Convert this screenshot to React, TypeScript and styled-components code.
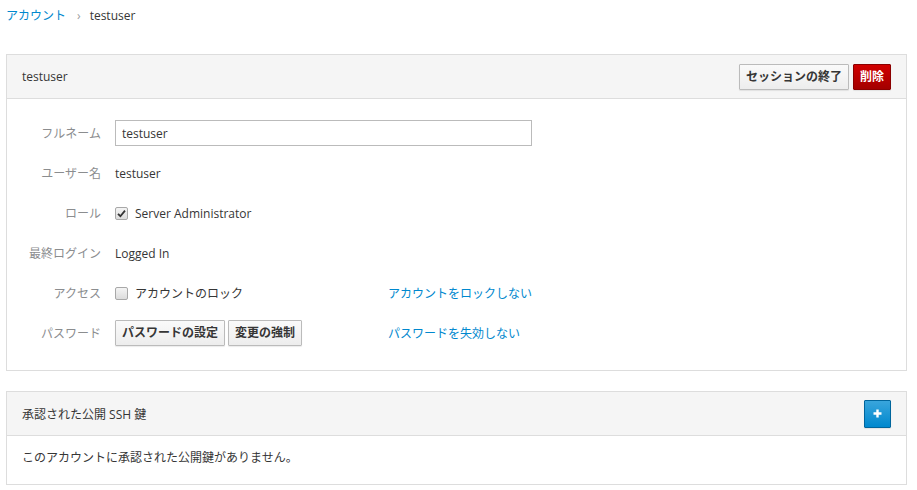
import styled, { createGlobalStyle } from "styled-components";

const GlobalStyle = createGlobalStyle`
  body {
    margin: 0;
    background: #fff;
    font-family: "Open Sans", "Noto Sans CJK JP", sans-serif;
    font-size: 12px;
    color: #363636;
  }
`;

const Page = styled.div`
  padding: 7px 10px 0 6px;
`;

const Breadcrumb = styled.nav`
  display: flex;
  align-items: center;
  gap: 9px;
  line-height: 18px;
  margin-bottom: 29px;
`;

const Crumb = styled.a`
  color: #0088ce;
  text-decoration: none;
  cursor: pointer;
`;

const Sep = styled.span`
  color: #9c9c9c;
  font-size: 12px;
  margin-left: 2px;
`;

const Panel = styled.section`
  border: 1px solid #ddd;
  background: #fff;
  margin-bottom: 20px;
`;

const PanelHeading = styled.header`
  display: flex;
  align-items: center;
  justify-content: space-between;
  height: 43px;
  padding: 0 15px;
  background: #f5f5f5;
  border-bottom: 1px solid #ddd;
`;

const Actions = styled.div`
  display: flex;
  gap: 4px;
`;

const Button = styled.button<{ $variant?: "default" | "danger" | "primary" }>`
  font-family: inherit;
  font-size: 12px;
  font-weight: 700;
  line-height: 20px;
  padding: 2px 6px;
  border-radius: 1px;
  cursor: pointer;
  border: 1px solid
    ${({ $variant }) =>
      $variant === "danger" ? "#8b0000" : $variant === "primary" ? "#00659c" : "#bbb"};
  color: ${({ $variant }) => ($variant && $variant !== "default" ? "#fff" : "#363636")};
  background: ${({ $variant }) =>
    $variant === "danger"
      ? "linear-gradient(#d10000, #a30000)"
      : $variant === "primary"
      ? "linear-gradient(#39a5dc, #0088ce)"
      : "linear-gradient(#fafafa, #ededed)"};
  box-shadow: 0 1px 1px rgba(3, 3, 3, 0.08);
`;

const IconButton = styled(Button)`
  width: 27px;
  height: 28px;
  padding: 0;
  display: flex;
  align-items: center;
  justify-content: center;
`;

const FormBody = styled.div`
  display: grid;
  grid-template-columns: 79px 259px 144px;
  grid-auto-rows: 26px;
  column-gap: 14px;
  row-gap: 14px;
  align-items: center;
  padding: 21px 15px 24px;
`;

const Label = styled.label`
  justify-self: end;
  color: #8b8d8f;
  white-space: nowrap;
`;

const TextInput = styled.input`
  grid-column: 2 / 4;
  height: 26px;
  box-sizing: border-box;
  border: 1px solid #bbb;
  padding: 2px 6px;
  font-family: inherit;
  font-size: 12px;
  color: #363636;
  outline: none;
`;

const Value = styled.div`
  display: flex;
  align-items: center;
  gap: 7px;
  white-space: nowrap;
`;

const Box = styled.span`
  width: 13px;
  height: 13px;
  box-sizing: border-box;
  border: 1px solid #a8a8a8;
  border-radius: 2px;
  background: linear-gradient(#f4f4f4, #dcdcdc);
  display: inline-flex;
  align-items: center;
  justify-content: center;
`;

const Link = styled.a`
  color: #0088ce;
  text-decoration: none;
  white-space: nowrap;
  cursor: pointer;
`;

const ButtonRow = styled.div`
  display: flex;
  gap: 3px;
`;

const PanelBody = styled.div`
  padding: 12px 15px 16px;
  line-height: 20px;
`;

function Checkbox({ checked }: { checked?: boolean }) {
  return (
    <Box>
      {checked && (
        <svg width="9" height="9" viewBox="0 0 9 9">
          <path d="M1 4.8 L3.4 7.2 L8 1.6" fill="none" stroke="#333" strokeWidth="1.8" />
        </svg>
      )}
    </Box>
  );
}

export default function App() {
  return (
    <>
      <GlobalStyle />
      <Page>
        <Breadcrumb>
          <Crumb>アカウント</Crumb>
          <Sep>›</Sep>
          <span>testuser</span>
        </Breadcrumb>

        <Panel>
          <PanelHeading>
            <span>testuser</span>
            <Actions>
              <Button>セッションの終了</Button>
              <Button $variant="danger">削除</Button>
            </Actions>
          </PanelHeading>
          <FormBody>
            <Label>フルネーム</Label>
            <TextInput defaultValue="testuser" />

            <Label>ユーザー名</Label>
            <Value>testuser</Value>
            <span />

            <Label>ロール</Label>
            <Value>
              <Checkbox checked />
              Server Administrator
            </Value>
            <span />

            <Label>最終ログイン</Label>
            <Value>Logged In</Value>
            <span />

            <Label>アクセス</Label>
            <Value>
              <Checkbox />
              アカウントのロック
            </Value>
            <Link>アカウントをロックしない</Link>

            <Label>パスワード</Label>
            <ButtonRow>
              <Button>パスワードの設定</Button>
              <Button>変更の強制</Button>
            </ButtonRow>
            <Link>パスワードを失効しない</Link>
          </FormBody>
        </Panel>

        <Panel>
          <PanelHeading>
            <span>承認された公開 SSH 鍵</span>
            <IconButton $variant="primary">
              <svg width="9" height="9" viewBox="0 0 9 9">
                <path d="M4.5 0.5 V8.5 M0.5 4.5 H8.5" stroke="#fff" strokeWidth="2.4" />
              </svg>
            </IconButton>
          </PanelHeading>
          <PanelBody>このアカウントに承認された公開鍵がありません。</PanelBody>
        </Panel>
      </Page>
    </>
  );
}
